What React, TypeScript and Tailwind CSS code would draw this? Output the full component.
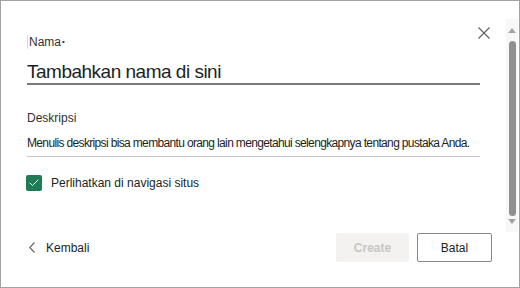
import { Check } from "lucide-react";

function Scrollbar() {
  return (
    <div className="mt-[18px] mb-[55px] mr-[1px] flex w-[12px] shrink-0 flex-col items-center bg-[#f7f7f7]">
      <svg width="8" height="6" viewBox="0 0 8 6" className="mt-[9px]">
        <path d="M0 5 L4 0 L8 5 Z" fill="#a3a3a3" />
      </svg>
      <div className="mt-[7px] w-[7px] flex-1 rounded-full bg-[#8f8f8f]" />
      <svg width="8" height="6" viewBox="0 0 8 6" className="mt-[3px] mb-[7px]">
        <path d="M0 0 L8 0 L4 5 Z" fill="#a3a3a3" />
      </svg>
    </div>
  );
}

export default function App() {
  return (
    <div className="flex h-[288px] w-[520px] border border-[#a3a3a3] bg-white font-['Liberation_Sans',sans-serif] text-[#201f1e]">
      <div className="flex min-w-0 flex-1 flex-col pl-[26px] pr-[16px] pt-[26px]">
        <div className="flex justify-end">
          <svg width="12" height="12" viewBox="0 0 12 12" className="text-[#605e5c]">
            <path d="M0.5 0.5 L11.5 11.5 M11.5 0.5 L0.5 11.5" stroke="currentColor" strokeWidth="1.1" />
          </svg>
        </div>

        <div className="mr-[10px]">
          <div className="-mt-[5px] flex items-center text-[12px] leading-[16px] text-[#323130]">
            <span className="mr-[1px] h-[14px] w-px bg-[#dcdcdc]" />
            Nama
            <span className="ml-[1px] text-[8px]">•</span>
          </div>
          <div className="mt-[10px] border-b-2 border-[#7a7a7a] text-[19px] leading-[23px] tracking-[-0.5px]">
            Tambahkan nama di sini
          </div>

          <div className="mt-[25px] text-[12px] leading-[16px] text-[#323130]">Deskripsi</div>
          <div className="mt-[9px] whitespace-nowrap border-b border-[#c8c6c4] pb-[5px] text-[12px] leading-[16px] tracking-[-0.65px]">
            Menulis deskripsi bisa membantu orang lain mengetahui selengkapnya tentang pustaka Anda.
          </div>

          <label className="mt-[18px] flex items-center gap-[9px] text-[12px] leading-[16px]">
            <span className="-ml-px flex h-[16px] w-[16px] items-center justify-center rounded-[2px] bg-[#1f7a56]">
              <Check size={12} strokeWidth={2} className="text-white" />
            </span>
            Perlihatkan di navigasi situs
          </label>
        </div>

        <div className="mt-auto mb-[25px] flex items-center">
          <div className="flex items-center gap-[11px] pl-[2px] text-[12px] text-[#201f1e]">
            <svg width="6" height="11" viewBox="0 0 6 11" className="text-[#605e5c]">
              <path d="M5.5 0.5 L0.7 5.5 L5.5 10.5" fill="none" stroke="currentColor" strokeWidth="1.1" />
            </svg>
            Kembali
          </div>
          <div className="ml-auto -mr-[2px] flex gap-[8px]">
            <button className="h-[29px] w-[73px] rounded-[2px] bg-[#f3f2f1] text-[12px] font-semibold text-[#c8c6c4]">
              Create
            </button>
            <button className="h-[29px] w-[75px] rounded-[2px] border border-[#8a8886] bg-white text-[12px] text-[#201f1e]">
              Batal
            </button>
          </div>
        </div>
      </div>
      <Scrollbar />
    </div>
  );
}
